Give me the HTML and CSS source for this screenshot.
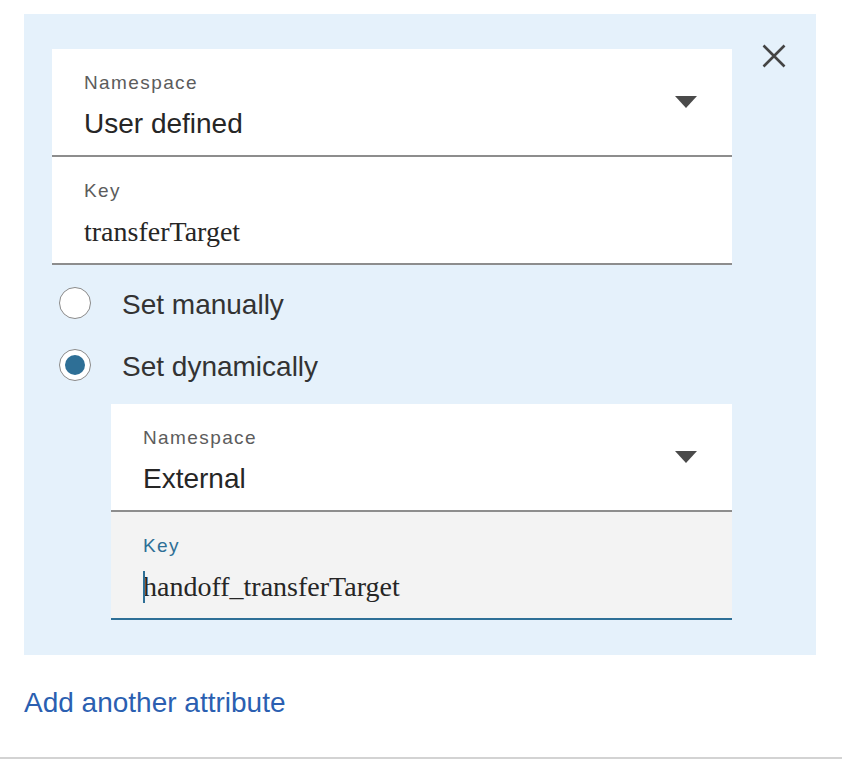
FILE: index.html
```html
<!DOCTYPE html>
<html>
<head>
<meta charset="utf-8">
<link rel="stylesheet" href="styles.css">
</head>
<body>
<div class="page">
  <div class="panel">
    <div class="form">
      <div class="card">
        <div class="field">
          <div class="field-text">
            <div class="label">Namespace</div>
            <div class="value">User defined</div>
          </div>
          <svg class="caret" width="24" height="12" viewBox="0 0 24 12"><path d="M1 0 H23 L12 12 Z" fill="#4a4a4a"/></svg>
        </div>
        <div class="field">
          <div class="field-text">
            <div class="label">Key</div>
            <div class="value serif">transferTarget</div>
          </div>
        </div>
      </div>

      <div class="radios">
        <div class="radio-row">
          <span class="radio"></span>
          <span class="radio-label">Set manually</span>
        </div>
        <div class="radio-row">
          <span class="radio checked"><span class="dot"></span></span>
          <span class="radio-label">Set dynamically</span>
        </div>
      </div>

      <div class="card nested">
        <div class="field">
          <div class="field-text">
            <div class="label">Namespace</div>
            <div class="value">External</div>
          </div>
          <svg class="caret" width="24" height="12" viewBox="0 0 24 12"><path d="M1 0 H23 L12 12 Z" fill="#4a4a4a"/></svg>
        </div>
        <div class="field focused">
          <div class="field-text">
            <div class="label">Key</div>
            <div class="value serif"><span class="cursor"></span>handoff_transferTarget</div>
          </div>
        </div>
      </div>
    </div>
    <div class="close-col">
      <svg class="close" width="24" height="24" viewBox="0 0 24 24"><path d="M1.5 1.5 L22.5 22.5 M22.5 1.5 L1.5 22.5" stroke="#444" stroke-width="2.6" fill="none"/></svg>
    </div>
  </div>
  <div class="add-link">Add another attribute</div>
</div>
<div class="rule"></div>
</body>
</html>
```
FILE: styles.css
```css
html, body {
  margin: 0;
  padding: 0;
  background: #ffffff;
  font-family: "Liberation Sans", Arial, sans-serif;
}

.page {
  padding: 14px 26px 0 24px;
}

.panel {
  display: flex;
  background: #e5f1fb;
  padding: 35px 0 35px 28px;
}

.form {
  width: 680px;
  display: flex;
  flex-direction: column;
}

.card {
  background: #ffffff;
  display: flex;
  flex-direction: column;
}

.field {
  display: flex;
  align-items: flex-start;
  justify-content: space-between;
  height: 106px;
  padding: 0 34px 0 32px;
  border-bottom: 2px solid #8d8d8d;
}

.field-text {
  display: flex;
  flex-direction: column;
  padding-top: 22px;
}

.label {
  font-size: 19px;
  letter-spacing: 1.4px;
  line-height: 24px;
  color: #5c5c5c;
}

.value {
  font-size: 28px;
  line-height: 32px;
  color: #262626;
  margin-top: 13px;
  position: relative;
}

.value.serif {
  font-family: "Liberation Serif", "Times New Roman", serif;
}

.caret {
  display: block;
  align-self: center;
}

.focused {
  background: #f3f3f3;
  border-bottom-color: #2e6f96;
}

.focused .label {
  color: #2e6f96;
}

.cursor {
  position: absolute;
  left: 0;
  top: 0;
  width: 2px;
  height: 32px;
  background: #2e6f96;
}

.radios {
  display: flex;
  flex-direction: column;
  padding: 7px 0 8px 7px;
}

.radio-row {
  display: flex;
  align-items: center;
  height: 62px;
  gap: 31px;
}

.radio {
  width: 30px;
  height: 30px;
  border: 1px solid #8a8a8a;
  border-radius: 50%;
  background: #ffffff;
  display: flex;
  align-items: center;
  justify-content: center;
  flex: none;
}

.dot {
  width: 20px;
  height: 20px;
  border-radius: 50%;
  background: #2e6f96;
}

.radio-label {
  font-size: 28px;
  color: #333333;
  line-height: 32px;
  padding-top: 4px;
}

.nested {
  margin-left: 59px;
}

.close-col {
  width: 84px;
  display: flex;
  justify-content: center;
  align-items: flex-start;
  margin-top: -5px;
}

.close {
  display: block;
}

.add-link {
  font-size: 28px;
  line-height: 32px;
  color: #2b5fb1;
  margin-top: 32px;
}

.rule {
  margin-top: 38px;
  height: 2px;
  background: #d3d3d3;
}
```
